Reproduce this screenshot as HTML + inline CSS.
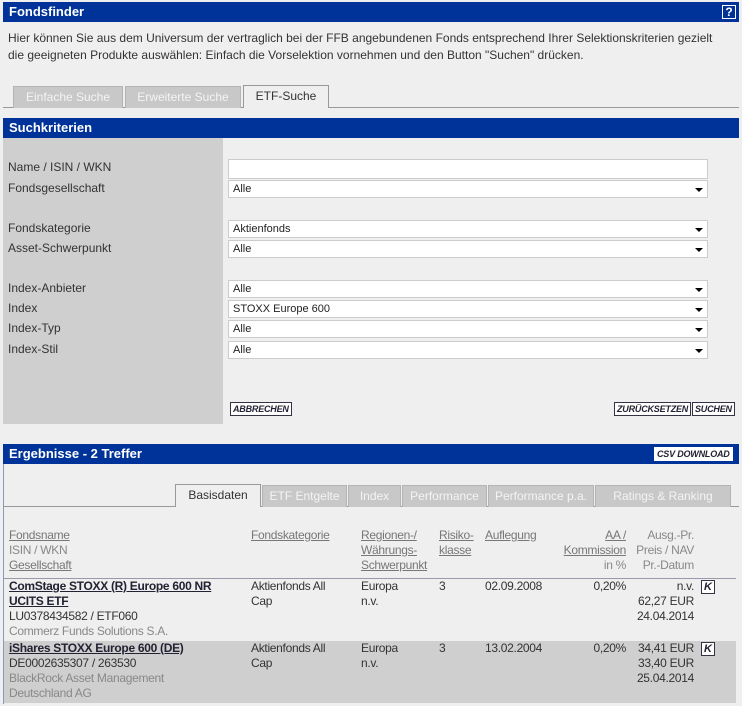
<!DOCTYPE html>
<html><head><meta charset="utf-8"><style>
*{margin:0;padding:0;box-sizing:border-box}
body{width:742px;height:706px;background:#efefef;font-family:"Liberation Sans",Arial,sans-serif;font-size:12px;color:#333;position:relative;overflow:hidden}
.a{position:absolute;white-space:nowrap}
.bar{position:absolute;left:3px;width:736px;background:#003399;color:#fff;font-weight:bold;font-size:13px;padding-left:6px}
.tab{position:absolute;height:22px;background:#c8c8c8;color:#f4f4f4;text-align:center;line-height:21px;border:1px solid #b4b4b4;border-bottom:none}
.tab.on{background:#efefef;color:#333;border-color:#999;height:23px}
.lbl{position:absolute;left:8px}
.sel{position:absolute;left:228px;width:480px;height:18px;background:#fff;border:1px solid #ccc;font-size:11px;padding:2px 4px;color:#222}
.sel:after{content:"";position:absolute;right:4px;top:7px;border:4px solid transparent;border-top:4px solid #000}
.btn{position:absolute;height:14px;border:1px solid #334;background:#fff;color:#223;font-size:9px;font-weight:bold;font-style:italic;line-height:12px;padding:0 2px;letter-spacing:-.2px}
.r{position:absolute;font-size:12px;line-height:15px;letter-spacing:-.3px}
.u{text-decoration:underline;color:#777}
.g{color:#888}
.k{position:absolute;width:14px;height:14px;border:1px solid #334;background:#fff;color:#223;font-weight:bold;font-style:italic;font-size:11px;text-align:center;line-height:12px}
</style></head><body>
<div class="bar" style="top:2px;height:20px;line-height:20px">Fondsfinder</div>
<div class="a" style="left:722px;top:5px;width:14px;height:14px;border:1px solid #fff;color:#fff;font-weight:bold;font-size:12px;text-align:center;line-height:12px">?</div>
<div class="a" style="left:8px;top:30px;line-height:17px;color:#333">Hier können Sie aus dem Universum der vertraglich bei der FFB angebundenen Fonds entsprechend Ihrer Selektionskriterien gezielt<br>die geeigneten Produkte auswählen: Einfach die Vorselektion vornehmen und den Button "Suchen" drücken.</div>
<div class="a" style="left:3px;top:107px;width:736px;height:1px;background:#999"></div>
<div class="tab" style="left:13px;top:86px;width:110px">Einfache Suche</div>
<div class="tab" style="left:125px;top:86px;width:116px">Erweiterte Suche</div>
<div class="tab on" style="left:243px;top:85px;width:86px">ETF-Suche</div>
<div class="bar" style="top:118px;height:20px;line-height:20px">Suchkriterien</div>
<div class="a" style="left:3px;top:138px;width:220px;height:286px;background:#cfcfcf"></div>
<div class="lbl" style="top:160px">Name / ISIN / WKN</div>
<div class="lbl" style="top:181px">Fondsgesellschaft</div>
<div class="lbl" style="top:221px">Fondskategorie</div>
<div class="lbl" style="top:241px">Asset-Schwerpunkt</div>
<div class="lbl" style="top:281px">Index-Anbieter</div>
<div class="lbl" style="top:301px">Index</div>
<div class="lbl" style="top:321px">Index-Typ</div>
<div class="lbl" style="top:342px">Index-Stil</div>
<div class="sel" style="top:159px;height:20px"></div>
<style>.sel:first-of-type:after{display:none}</style>
<div class="a" style="left:229px;top:160px;width:478px;height:18px;background:#fff"></div>
<div class="sel" style="top:180px">Alle</div>
<div class="sel" style="top:220px">Aktienfonds</div>
<div class="sel" style="top:240px">Alle</div>
<div class="sel" style="top:280px">Alle</div>
<div class="sel" style="top:300px">STOXX Europe 600</div>
<div class="sel" style="top:320px">Alle</div>
<div class="sel" style="top:341px">Alle</div>
<div class="btn" style="left:230px;top:402px">ABBRECHEN</div>
<div class="btn" style="left:614px;top:402px">ZURÜCKSETZEN</div>
<div class="btn" style="left:692px;top:402px">SUCHEN</div>
<div class="bar" style="top:444px;height:20px;line-height:20px">Ergebnisse - 2 Treffer</div>
<div class="btn" style="left:654px;top:447px;border-color:#fff;font-size:9px">CSV DOWNLOAD</div>
<div class="a" style="left:3px;top:464px;width:1px;height:240px;background:#8899bb"></div>
<div class="a" style="left:3px;top:506px;width:736px;height:1px;background:#999"></div>
<div class="tab on" style="left:175px;top:484px;width:86px">Basisdaten</div>
<div class="tab" style="left:262px;top:485px;width:85px">ETF Entgelte</div>
<div class="tab" style="left:348px;top:485px;width:53px">Index</div>
<div class="tab" style="left:402px;top:485px;width:85px">Performance</div>
<div class="tab" style="left:488px;top:485px;width:106px">Performance p.a.</div>
<div class="tab" style="left:595px;top:485px;width:136px">Ratings &amp; Ranking</div>
<div class="r" style="left:9px;top:528px"><span class="u">Fondsname</span><br><span class="g">ISIN / WKN</span><br><span class="u">Gesellschaft</span></div>
<div class="r" style="left:251px;top:528px"><span class="u">Fondskategorie</span></div>
<div class="r" style="left:361px;top:528px"><span class="u">Regionen-/<br>Währungs-<br>Schwerpunkt</span></div>
<div class="r" style="left:439px;top:528px"><span class="u">Risiko-<br>klasse</span></div>
<div class="r" style="left:485px;top:528px"><span class="u">Auflegung</span></div>
<div class="r g" style="right:116px;top:528px;text-align:right"><span class="u">AA /<br>Kommission</span><br>in %</div>
<div class="r g" style="right:48px;top:528px;text-align:right">Ausg.-Pr.<br>Preis / NAV<br>Pr.-Datum</div>
<div class="a" style="left:4px;top:578px;width:732px;height:1px;background:#99a"></div>
<div class="r" style="left:9px;top:579px;font-weight:bold;color:#223"><span style="text-decoration:underline">ComStage STOXX (R) Europe 600 NR<br>UCITS ETF</span></div>
<div class="r" style="left:9px;top:609px">LU0378434582 / ETF060<br><span class="g">Commerz Funds Solutions S.A.</span></div>
<div class="r" style="left:251px;top:579px">Aktienfonds All<br>Cap</div>
<div class="r" style="left:361px;top:579px">Europa<br>n.v.</div>
<div class="r" style="left:439px;top:579px">3</div>
<div class="r" style="left:485px;top:579px">02.09.2008</div>
<div class="r" style="right:116px;top:579px">0,20%</div>
<div class="r" style="right:48px;top:579px;text-align:right">n.v.<br>62,27 EUR<br>24.04.2014</div>
<div class="k" style="left:701px;top:580px">K</div>
<div class="a" style="left:4px;top:641px;width:732px;height:62px;background:#cfcfcf"></div>
<div class="r" style="left:9px;top:641px;font-weight:bold;color:#223"><span style="text-decoration:underline">iShares STOXX Europe 600 (DE)</span></div>
<div class="r" style="left:9px;top:656px">DE0002635307 / 263530<br><span class="g">BlackRock Asset Management<br>Deutschland AG</span></div>
<div class="r" style="left:251px;top:641px">Aktienfonds All<br>Cap</div>
<div class="r" style="left:361px;top:641px">Europa<br>n.v.</div>
<div class="r" style="left:439px;top:641px">3</div>
<div class="r" style="left:485px;top:641px">13.02.2004</div>
<div class="r" style="right:116px;top:641px">0,20%</div>
<div class="r" style="right:48px;top:641px;text-align:right">34,41 EUR<br>33,40 EUR<br>25.04.2014</div>
<div class="k" style="left:701px;top:642px">K</div>
</body></html>
